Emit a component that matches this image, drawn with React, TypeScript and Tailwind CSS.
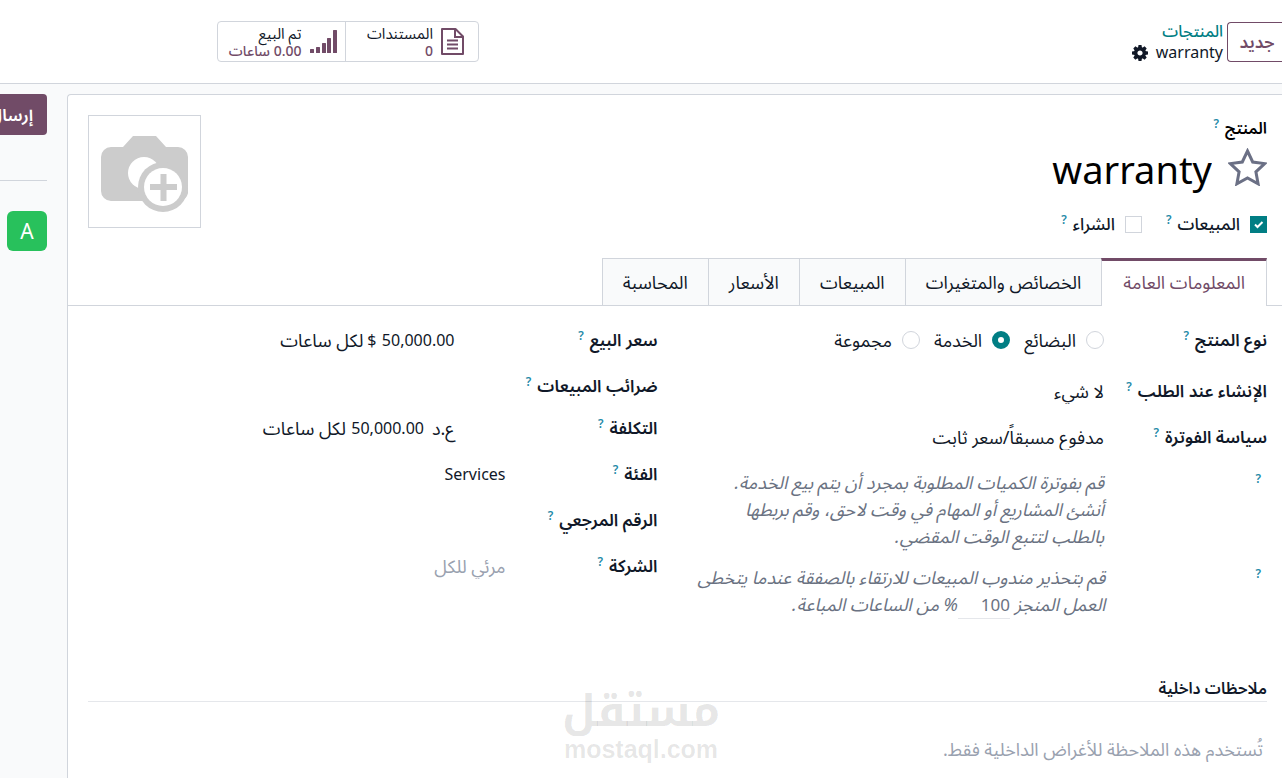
import React from "react";

const TABS = [
  "المعلومات العامة",
  "الخصائص والمتغيرات",
  "المبيعات",
  "الأسعار",
  "المحاسبة",
];

const PRODUCT_TYPES = ["البضائع", "الخدمة", "مجموعة"];

function Help() {
  return (
    <sup className="ms-1.5 top-0 align-[6px] text-[12px] leading-none font-semibold text-[#1f8aa8]">
      ?
    </sup>
  );
}

function Field({
  label,
  htmlFor,
  narrow,
  children,
}: {
  label?: string;
  htmlFor?: string;
  narrow?: boolean;
  children?: React.ReactNode;
}) {
  return (
    <div className="flex items-start">
      <label
        htmlFor={htmlFor}
        className={`${narrow ? "w-[152px]" : "w-[163px]"} shrink-0 whitespace-nowrap text-[17px] font-semibold text-gray-900`}
      >
        {label}
        <Help />
      </label>
      <div className="min-w-0 flex-1">{children}</div>
    </div>
  );
}

function DocumentIcon() {
  return (
    <svg width="23" height="27" viewBox="0 0 23 27" fill="none" stroke="#714b67" strokeWidth="2">
      <path d="M1 1h13.500l7.500 7.500V26H1z" strokeLinejoin="round" />
      <path d="M14 1v8h8M6 12.500h11M6 16.500h11M6 20.500h11" />
    </svg>
  );
}

function SignalIcon() {
  return (
    <svg width="27" height="23" viewBox="0 0 27 23" fill="#714b67">
      <rect x="0" y="19" width="4" height="4" rx="0.500" />
      <rect x="6" y="17" width="4" height="6" rx="0.500" />
      <rect x="12" y="13" width="4" height="10" rx="0.500" />
      <rect x="17" y="8" width="4" height="15" rx="0.500" />
      <rect x="23" y="0" width="4" height="23" rx="0.500" />
    </svg>
  );
}

function GearIcon() {
  return (
    <svg width="16" height="16" viewBox="-8 -8 16 16" fill="#111827">
      <circle r="4.300" fill="none" stroke="#111827" strokeWidth="3.400" />
      {[0, 45, 90, 135].map((a) => (
        <g key={a} transform={`rotate(${a})`}>
          <path d="M-2-5l.5-3h3l.5 3zM-2 5l.5 3h3l.5-3z" />
        </g>
      ))}
    </svg>
  );
}

function StarIcon() {
  return (
    <svg width="39" height="38" viewBox="0 0 39 38" fill="none" stroke="#6b7085" strokeWidth="3">
      <path d="M19.500 3l5.200 11 12 1.600-8.800 8.200 2.200 12-10.600-5.800-10.600 5.800 2.200-12-8.800-8.200 12-1.600z" />
    </svg>
  );
}

function CameraIcon() {
  return (
    <svg width="87" height="76" viewBox="0 0 87 76">
      <path
        fill="#ccc"
        d="M10 11h12L32 0h23l10 11h12a10 10 0 0 1 10 10v32a10 10 0 0 1-10 12H10A10 10 0 0 1 0 55V21a10 10 0 0 1 10-10z"
      />
      <circle cx="43" cy="37" r="16" fill="#fff" />
      <circle cx="62" cy="51" r="25" fill="#ccc" />
      <circle cx="62" cy="51" r="19" fill="#fff" />
      <path d="M49 51h27M62.500 38v27" stroke="#ccc" strokeWidth="6" />
    </svg>
  );
}

function Stat({ title, value, icon }: { title: string; value: string; icon: React.ReactNode }) {
  return (
    <button className="flex flex-1 items-center gap-2 ps-[14px] text-start text-[14px] leading-[17px] last:ps-2">
      {icon}
      <span className="flex flex-col whitespace-nowrap">
        <span className="text-[15px] text-gray-900">{title}</span>
        <span className="font-medium text-[#714b67]">{value}</span>
      </span>
    </button>
  );
}

function CheckField({ id, label, checked }: { id: string; label: string; checked?: boolean }) {
  return (
    <div className="flex items-center">
      <span className="relative grid size-[17px]">
        <input
          id={id}
          type="checkbox"
          defaultChecked={checked}
          className="peer size-[17px] appearance-none border border-gray-300 checked:border-[#017e84] checked:bg-[#017e84]"
        />
        <svg
          viewBox="0 0 17 17"
          className="pointer-events-none absolute inset-0 hidden peer-checked:block"
          fill="none"
          stroke="#fff"
          strokeWidth="2"
        >
          <path d="M5 8.500l2.500 2.500L12.500 6" />
        </svg>
      </span>
      <label htmlFor={id} className="ms-2.5 text-[17px] font-medium text-gray-900">
        {label}
        <Help />
      </label>
    </div>
  );
}

export default function App() {
  return (
    <div
      dir="rtl"
      className="relative flex h-screen flex-col overflow-hidden bg-[#f9fafb] font-['Noto_Sans','Noto_Sans_Arabic',sans-serif] text-[16px] leading-[26px] text-gray-900"
    >
      <header className="flex h-[84px] shrink-0 items-start border-b border-gray-300 bg-white pt-[21px] pl-[217px]">
        <button className="mt-px h-10 w-[55px] rounded-l border border-r-0 border-[#714b67] pe-1 text-[17px] font-semibold text-[#714b67]">
          جديد
        </button>
        <div className="ms-1 flex flex-col leading-[21px]">
          <a href="#" className="text-[16px] font-medium text-[#017e84]">
            المنتجات
          </a>
          <span className="flex items-center gap-2">
            warranty
            <button aria-label="الإجراءات">
              <GearIcon />
            </button>
          </span>
        </div>
        <div className="ms-auto flex h-[41px] w-[262px] divide-x divide-gray-300 rounded border border-gray-300">
          <Stat title="المستندات" value="0" icon={<DocumentIcon />} />
          <Stat title="تم البيع" value="0.00 ساعات" icon={<SignalIcon />} />
        </div>
      </header>

      <div className="flex min-h-0 flex-1 gap-5 pt-2.5">
        <main className="min-w-0 flex-1 rounded-tl border-t border-l border-gray-300 bg-white">
          <div className="flex items-start justify-between pt-5 pr-[15px] pl-5">
            <div>
              <label htmlFor="name" className="block text-[16px] font-semibold text-black">
                المنتج
                <Help />
              </label>
              <div className="flex items-center gap-4">
                <button aria-label="المفضلة" className="pb-1">
                  <StarIcon />
                </button>
                <input
                  id="name"
                  defaultValue="warranty"
                  className="h-14 w-80 text-[38px] text-black outline-none"
                />
              </div>
              <div className="mt-3.5 flex gap-6">
                <CheckField id="sale" label="المبيعات" checked />
                <CheckField id="purchase" label="الشراء" />
              </div>
            </div>
            <button
              aria-label="الصورة"
              className="grid size-[113px] place-items-center border border-gray-300 pt-1"
            >
              <CameraIcon />
            </button>
          </div>

          <div className="mt-[21px] flex border-b border-gray-300 pr-[15px]" role="tablist">
            {TABS.map((tab, i) => (
              <button
                key={tab}
                role="tab"
                aria-selected={i === 0}
                className={
                  i === 0
                    ? "-mb-px h-12 border-x border-t-3 border-gray-300 border-t-[#714b67] bg-white px-[21px] pb-1 text-[18px] text-[#714b67]"
                    : "h-[47px] border-t border-l border-gray-300 bg-[#f9fafb] px-5 text-[18px]"
                }
              >
                {tab}
              </button>
            ))}
          </div>

          <div className="grid grid-cols-2 gap-x-10 pt-[21px] pr-[15px] pl-5">
            <div className="flex flex-col gap-5">
              <div className="pb-[5px]">
                <Field label="نوع المنتج">
                  <div className="flex gap-3.5">
                    {PRODUCT_TYPES.map((type, i) => (
                      <label key={type} className="flex items-center gap-2.5 text-[18px]">
                        <input
                          type="radio"
                          name="type"
                          defaultChecked={i === 1}
                          className="size-[18px] appearance-none rounded-full border border-gray-300 checked:border-[6px] checked:border-[#017e84]"
                        />
                        {type}
                      </label>
                    ))}
                  </div>
                </Field>
              </div>
              <Field label="الإنشاء عند الطلب" htmlFor="tracking">
                <select id="tracking" className="block appearance-none text-[18px]">
                  <option>لا شيء</option>
                </select>
              </Field>
              <Field label="سياسة الفوترة" htmlFor="policy">
                <select id="policy" className="block appearance-none text-[18px]">
                  <option>مدفوع مسبقاً/سعر ثابت</option>
                </select>
              </Field>
              <div className="-mt-px flex flex-col gap-3.5 text-[18px] leading-[27px] whitespace-nowrap text-gray-500 italic">
                <div className="flex">
                  <div className="w-[163px] not-italic">
                    <Help />
                  </div>
                  <p>
                    قم بفوترة الكميات المطلوبة بمجرد أن يتم بيع الخدمة.
                    <br />
                    أنشئ المشاريع أو المهام في وقت لاحق، وقم بربطها
                    <br />
                    بالطلب لتتبع الوقت المقضي.
                  </p>
                </div>
                <div className="flex">
                  <div className="w-[163px] not-italic">
                    <Help />
                  </div>
                  <p>
                    قم بتحذير مندوب المبيعات للارتقاء بالصفقة عندما يتخطى
                    <br />
                    العمل المنجز{" "}
                    <input
                      aria-label="النسبة"
                      defaultValue="100"
                      className="h-[27px] w-[52px] border-b border-gray-200 text-[17px] not-italic outline-none"
                    />
                    % من الساعات المباعة.
                  </p>
                </div>
              </div>
            </div>

            <div className="flex flex-col gap-5">
              <Field narrow label="سعر البيع" htmlFor="price">
                <div className="flex gap-1 ps-[51px] text-[18px] whitespace-nowrap">
                  <input
                    id="price"
                    defaultValue="50,000.00"
                    className="w-[74px] text-[16px] outline-none"
                  />
                  <span className="text-[16px]">$</span>
                  <span>لكل ساعات</span>
                </div>
              </Field>
              <div className="-mb-1">
                <Field narrow label="ضرائب المبيعات" />
              </div>
              <Field narrow label="التكلفة" htmlFor="cost">
                <div className="flex gap-1 ps-[51px] text-[18px] whitespace-nowrap">
                  <span>ع.د</span>
                  <input
                    id="cost"
                    defaultValue="50,000.00"
                    className="ms-1 w-[74px] text-[16px] outline-none"
                  />
                  <span>لكل ساعات</span>
                </div>
              </Field>
              <Field narrow label="الفئة" htmlFor="category">
                <select id="category" className="block appearance-none">
                  <option>Services</option>
                </select>
              </Field>
              <Field narrow label="الرقم المرجعي" htmlFor="ref">
                <input id="ref" className="block w-full outline-none" />
              </Field>
              <Field narrow label="الشركة" htmlFor="company">
                <input
                  id="company"
                  placeholder="مرئي للكل"
                  className="block w-full text-[18px] outline-none placeholder:text-gray-400"
                />
              </Field>
            </div>
          </div>

          <div className="mt-14 mr-[15px] ml-5">
            <label
              htmlFor="notes"
              className="block border-b border-gray-200 text-[16px] font-semibold text-gray-900"
            >
              ملاحظات داخلية
            </label>
            <textarea
              id="notes"
              rows={1}
              placeholder="تُستخدم هذه الملاحظة للأغراض الداخلية فقط."
              className="mt-[34px] block w-full resize-none px-1 text-[18px] outline-none placeholder:text-gray-400"
            />
          </div>
        </main>

        <aside className="w-[47px] shrink-0">
          <button className="flex h-[41px] w-full items-center overflow-hidden rounded-r bg-[#714b67] ps-3.5 text-[17px] font-semibold whitespace-nowrap text-white">
            إرسال رسالة
          </button>
          <hr className="mt-[45px] border-gray-300" />
          <div className="mt-[30px] grid size-10 place-items-center rounded-md bg-[#28c15c] text-[21px] text-white">
            A
          </div>
        </aside>
      </div>

      <div className="pointer-events-none absolute bottom-4 left-1/2 -translate-x-1/2 text-center font-bold text-black/10">
        <div className="font-['Noto_Kufi_Arabic','Noto_Sans_Arabic',sans-serif] text-[44px] leading-[48px]">
          مستقل
        </div>
        <div className="font-['Liberation_Sans',sans-serif] text-[25px] leading-[26px]">
          mostaql.com
        </div>
      </div>
    </div>
  );
}
